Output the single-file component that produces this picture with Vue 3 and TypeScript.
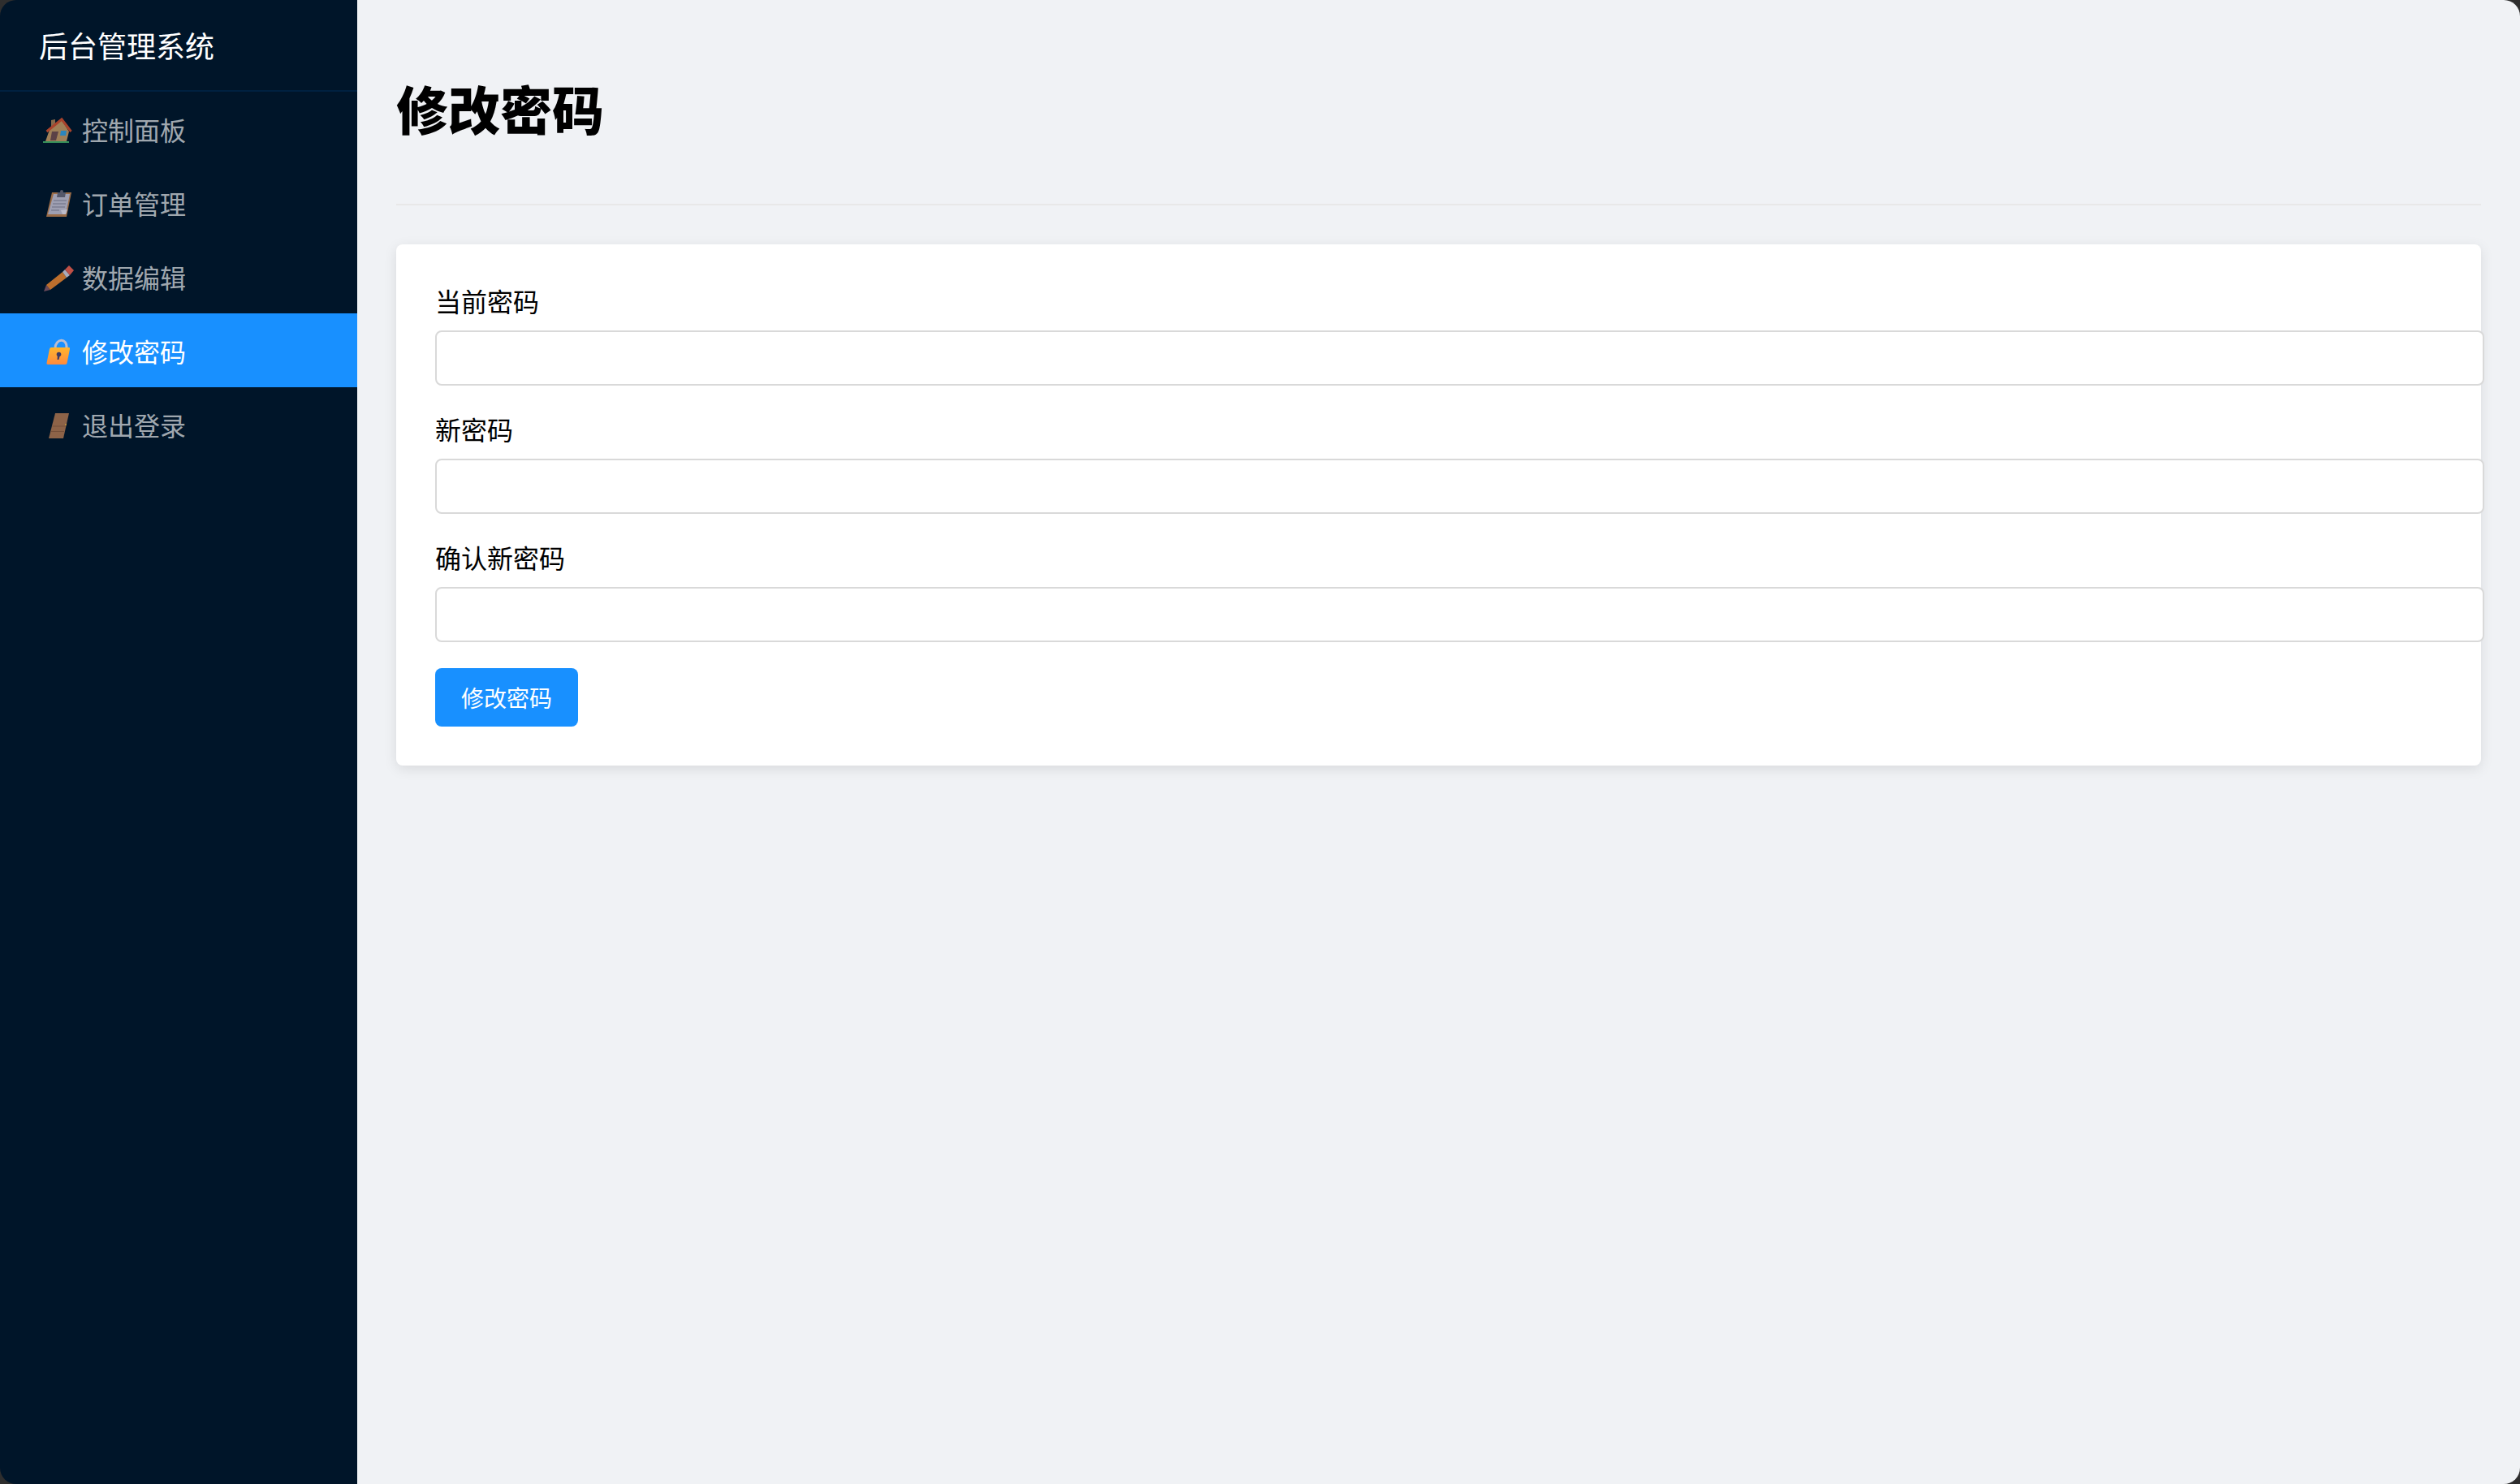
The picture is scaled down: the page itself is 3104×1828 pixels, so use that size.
<script setup lang="ts">
const fields: string[] = ['当前密码', '新密码', '确认新密码']
const menu: { key: string; label: string; active?: boolean }[] = [
  { key: 'home', label: '控制面板' },
  { key: 'clip', label: '订单管理' },
  { key: 'pencil', label: '数据编辑' },
  { key: 'lock', label: '修改密码', active: true },
  { key: 'door', label: '退出登录' },
]
</script>

<template>
  <div class="layout">
    <aside class="sidebar">
      <div class="logo">后台管理系统</div>
      <nav>
        <a v-for="m in menu" :key="m.key" class="item" :class="{ active: m.active }">
          <svg class="ico" viewBox="0 0 42 43" width="42" height="43">
            <g v-if="m.key === 'home'">
              <polygon points="15,11 20,10 20,19 15,22" fill="#85684a" />
              <polygon points="13,23 28,11 37,25 34,37 8,37" fill="#a08058" />
              <polyline points="9.5,25 28,10 39.5,25" fill="none" stroke="#a8432c" stroke-width="3" />
              <polygon points="16,25 24,25 21,36 14,36" fill="#5c4146" />
              <polygon points="27,24 34,24 33,30 26,30" fill="#2a86bd" />
              <rect x="5" y="37" width="32" height="2" fill="#37905a" />
            </g>
            <g v-else-if="m.key === 'clip'">
              <polygon points="16,9 40,9 34,39 9,39" fill="#9a6c47" />
              <polygon points="18,11 38,11 33,36 11,36" fill="#9e9fb2" />
              <path d="M18 19H34M17 23H33M16 27H32M15 31H25" stroke="#6b6e82" stroke-width="1.2" />
              <polygon points="27,31 35,30 33,36 29,36" fill="#bdbdcb" />
              <polygon points="23,9 33,9 32,15 22,15" fill="#55586a" />
              <circle cx="28" cy="8" r="2" fill="#55586a" />
            </g>
            <g v-else-if="m.key === 'pencil'">
              <polygon points="9,32 14,38 6,40" fill="#6b4a5a" />
              <polygon points="9,32 29,16 34,23 14,38" fill="#bd6f2d" />
              <polygon points="29,16 32,13 38,20 34,23" fill="#abacb9" />
              <polygon points="32,13 37,8 43,14 38,20" fill="#bf5046" />
            </g>
            <g v-else-if="m.key === 'lock'">
              <path d="M20 19C20 7 35 5 34 19" fill="none" stroke="#b9bdd0" stroke-width="3" />
              <defs>
                <linearGradient id="lockg" x1="0" y1="0" x2="0" y2="1">
                  <stop offset="0" stop-color="#ffb52e" />
                  <stop offset="1" stop-color="#ff8a3c" />
                </linearGradient>
              </defs>
              <path d="M15 18H37Q38.500 18 38 20L34.500 37.500Q34 39 32 39H11Q9 39 9.500 37L13 20Q13.500 18 15 18Z" fill="url(#lockg)" />
              <circle cx="24.500" cy="26.500" r="2.800" fill="#3d3a63" />
              <polygon points="23,27 26,27 24.500,33 22.500,33" fill="#3d3a63" />
            </g>
            <g v-else>
              <polygon points="20,8 37,8 30,39 12,39" fill="#8d6348" />
              <path d="M16.500 24H32.500M15 30.500H31" stroke="#75503a" stroke-width="1.2" />
              <circle cx="33" cy="22" r="1" fill="#c99a3a" />
            </g>
          </svg>
          <span>{{ m.label }}</span>
        </a>
      </nav>
    </aside>
    <main class="main">
      <header class="head">
        <h1>修改密码</h1>
      </header>
      <form class="card" @submit.prevent>
        <div v-for="f in fields" :key="f" class="group">
          <label>{{ f }}</label>
          <input type="password" />
        </div>
        <button type="submit">修改密码</button>
      </form>
    </main>
  </div>
</template>

<style>
html, body { margin: 0; background: #2e2e2e; }
</style>

<style scoped>
.layout {
  display: flex;
  width: 3104px;
  height: 1828px;
  overflow: hidden;
  border-radius: 20px;
  font-family: "Noto Sans CJK SC", "Noto Sans", sans-serif;
}
.sidebar {
  width: 440px;
  flex: none;
  background: #001529;
  color: #fff;
}
.logo {
  box-sizing: border-box;
  height: 113px;
  padding: 0 48px;
  border-bottom: 2px solid #002140;
  font-size: 36px;
  line-height: 111px;
}
.item {
  display: flex;
  align-items: center;
  height: 91px;
  padding-left: 48px;
  color: rgba(255, 255, 255, 0.65);
  font-size: 32px;
}
.item.active {
  background: #1890ff;
  color: #fff;
}
.ico {
  flex: none;
  margin-right: 11px;
  overflow: visible;
}
.main {
  flex: 1;
  box-sizing: border-box;
  padding: 48px;
  background: #f0f2f5;
  min-width: 0;
}
.head {
  height: 203px;
  border-bottom: 2px solid #e8e8e8;
  margin-bottom: 48px;
}
h1 {
  margin: 0;
  padding-top: 37px;
  font-size: 64px;
  line-height: 94px;
  font-weight: 900;
  color: #000;
}
.card {
  padding: 48px;
  background: #fff;
  border-radius: 8px;
  box-shadow: 0 4px 16px rgba(0, 0, 0, 0.1);
}
.group {
  margin-bottom: 32px;
}
label {
  display: block;
  height: 46px;
  margin-bottom: 12px;
  font-size: 32px;
  line-height: 42px;
  color: #000;
}
input {
  display: block;
  width: 100%;
  height: 32px;
  padding: 16px 24px;
  border: 2px solid #d9d9d9;
  border-radius: 8px;
  background: #fff;
  outline: none;
}
button {
  display: block;
  width: 176px;
  height: 72px;
  padding: 0;
  border: none;
  border-radius: 8px;
  background: #1890ff;
  color: #fff;
  font-family: inherit;
  font-size: 28px;
}
</style>
